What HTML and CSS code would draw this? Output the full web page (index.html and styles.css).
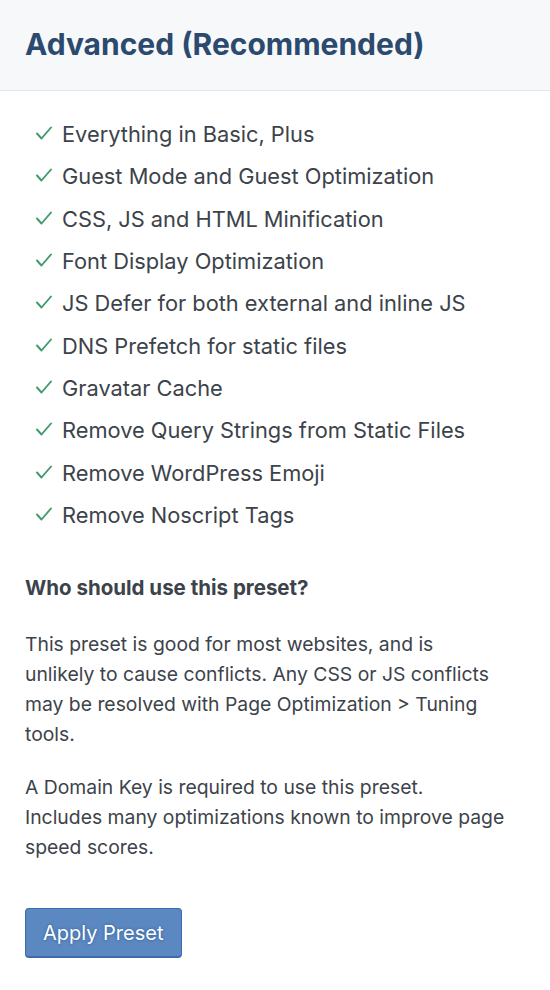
FILE: index.html
```html
<!DOCTYPE html>
<html>
<head>
<meta charset="utf-8">
<link rel="stylesheet" href="styles.css">
</head>
<body>
<div class="card">
  <div class="head"><h2 class="title">Advanced (Recommended)</h2></div>
  <div class="body">
    <ul class="features">
      <li><svg class="check" viewBox="0 0 16 14"><polyline points="1,7.5 5.5,12.5 15,1.5"/></svg>Everything in Basic, Plus</li>
      <li><svg class="check" viewBox="0 0 16 14"><polyline points="1,7.5 5.5,12.5 15,1.5"/></svg>Guest Mode and Guest Optimization</li>
      <li><svg class="check" viewBox="0 0 16 14"><polyline points="1,7.5 5.5,12.5 15,1.5"/></svg>CSS, JS and HTML Minification</li>
      <li><svg class="check" viewBox="0 0 16 14"><polyline points="1,7.5 5.5,12.5 15,1.5"/></svg>Font Display Optimization</li>
      <li><svg class="check" viewBox="0 0 16 14"><polyline points="1,7.5 5.5,12.5 15,1.5"/></svg>JS Defer for both external and inline JS</li>
      <li><svg class="check" viewBox="0 0 16 14"><polyline points="1,7.5 5.5,12.5 15,1.5"/></svg>DNS Prefetch for static files</li>
      <li><svg class="check" viewBox="0 0 16 14"><polyline points="1,7.5 5.5,12.5 15,1.5"/></svg>Gravatar Cache</li>
      <li><svg class="check" viewBox="0 0 16 14"><polyline points="1,7.5 5.5,12.5 15,1.5"/></svg>Remove Query Strings from Static Files</li>
      <li><svg class="check" viewBox="0 0 16 14"><polyline points="1,7.5 5.5,12.5 15,1.5"/></svg>Remove WordPress Emoji</li>
      <li><svg class="check" viewBox="0 0 16 14"><polyline points="1,7.5 5.5,12.5 15,1.5"/></svg>Remove Noscript Tags</li>
    </ul>
    <p class="who">Who should use this preset?</p>
    <p class="para">This preset is good for most websites, and is unlikely to cause conflicts. Any CSS or JS conflicts may be resolved with Page Optimization &gt; Tuning tools.</p>
    <p class="para">A Domain Key is required to use this preset. Includes many optimizations known to improve page speed scores.</p>
    <button class="btn">Apply Preset</button>
  </div>
</div>
</body>
</html>
```
FILE: styles.css
```css
html, body {
  margin: 0;
  padding: 0;
  background: #fff;
}
body {
  font-family: Inter, "Liberation Sans", Arial, sans-serif;
  color: #3c434a;
  width: 550px;
}
.head {
  background: #f6f8fa;
  border-bottom: 1px solid #e4e6e8;
  height: 91px;
  box-sizing: border-box;
  display: flex;
  align-items: center;
  padding: 0 25px;
}
.title {
  margin: 0 0 2px;
  font-size: 30px;
  font-weight: 700;
  color: #2b4a6e;
}
.body {
  padding: 0 45px 0 25px;
}
.features {
  list-style: none;
  margin: 0;
  padding: 22px 0 0 11px;
}
.features li {
  display: flex;
  align-items: center;
  font-size: 21.8px;
  height: 42.33px;
  color: #3c434a;
}
.check {
  width: 16px;
  height: 14px;
  margin: -2px 10px 0 0;
  fill: none;
  stroke: #3f9a6c;
  stroke-width: 1.9;
  stroke-linecap: round;
  stroke-linejoin: round;
}
.who {
  font-weight: 700;
  font-size: 20.5px;
  line-height: 24px;
  margin: 40px 0 0;
  color: #3c434a;
}
.para {
  font-size: 19.35px;
  line-height: 30px;
  margin: 29px 0 0;
}
.para + .para {
  margin-top: 23px;
}
.btn {
  margin-top: 46px;
  background: #5b88c1;
  border: 1px solid #3c6cab;
  border-bottom-width: 2px;
  border-radius: 4px;
  color: #fff;
  font-family: Inter, "Liberation Sans", Arial, sans-serif;
  font-size: 20px;
  padding: 0 17px;
  height: 50px;
  text-shadow: 0 0 3px #2c5a94;
}
```
